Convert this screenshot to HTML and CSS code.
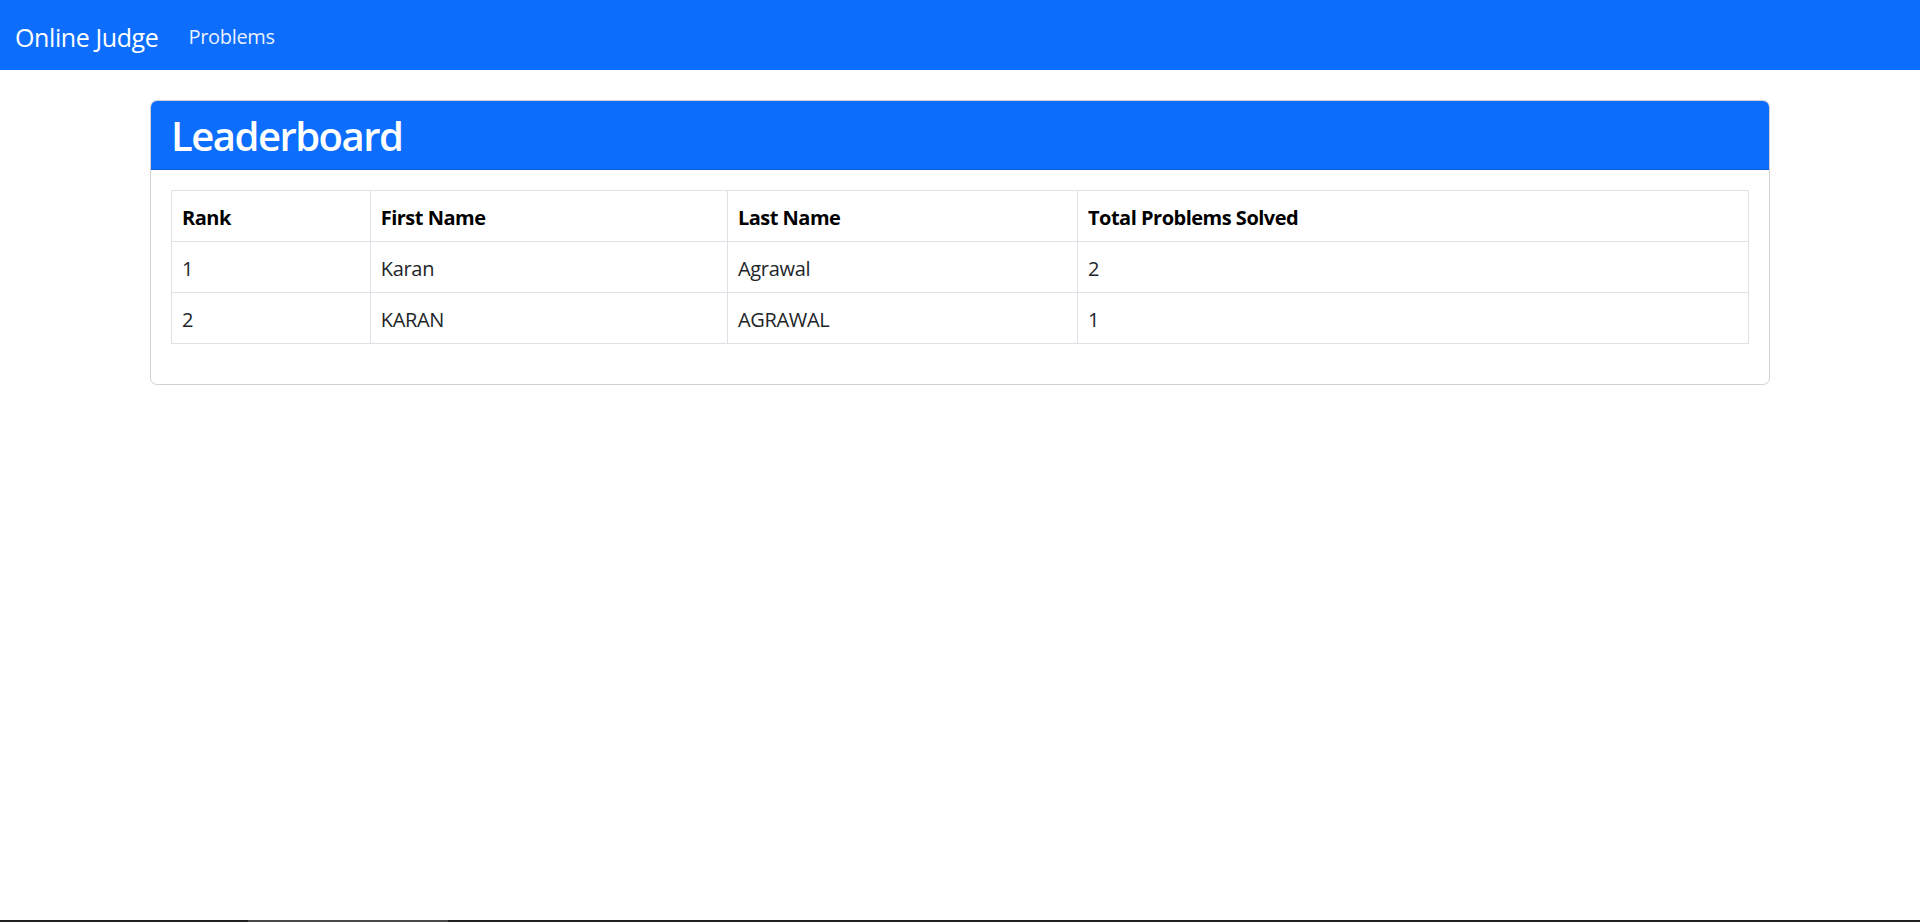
FILE: index.html
```html
<!DOCTYPE html>
<html lang="en">
<head>
<meta charset="utf-8">
<title>Leaderboard</title>
<link rel="stylesheet" href="styles.css">
</head>
<body>
<nav class="navbar">
  <a class="brand" href="#">Online Judge</a>
  <ul class="nav">
    <li><a class="nav-link" href="#">Problems</a></li>
  </ul>
</nav>
<main class="container">
  <section class="card">
    <header class="card-header">
      <h2 class="title">Leaderboard</h2>
    </header>
    <div class="card-body">
      <table class="table">
        <colgroup>
          <col class="c-rank">
          <col class="c-first">
          <col class="c-last">
          <col>
        </colgroup>
        <thead>
          <tr><th>Rank</th><th>First Name</th><th>Last Name</th><th>Total Problems Solved</th></tr>
        </thead>
        <tbody>
          <tr><td>1</td><td>Karan</td><td>Agrawal</td><td>2</td></tr>
          <tr><td>2</td><td>KARAN</td><td>AGRAWAL</td><td>1</td></tr>
        </tbody>
      </table>
    </div>
  </section>
</main>
<div class="taskbar"><span class="seg-a"></span><span class="seg-b"></span><span class="seg-c"></span></div>
</body>
</html>
```
FILE: styles.css
```css
* { box-sizing: border-box; }
html, body { margin: 0; padding: 0; }
body {
  font-family: "Open Sans", "Noto Sans", "Liberation Sans", sans-serif;
  font-size: 20px;
  line-height: 1.5;
  color: #212529;
  background: #fff;
  letter-spacing: -0.3px;
}
.navbar {
  background: #0d6efd;
  height: 70px;
  display: flex;
  align-items: center;
  padding: 10px 15px;
}
.brand {
  color: #fff;
  text-decoration: none;
  font-size: 25px;
  line-height: 37.5px;
  padding: 9px 0 3px;
  margin-right: 20px;
  letter-spacing: -0.4px;
}
.nav { list-style: none; margin: 0; padding: 0; display: flex; }
.nav-link {
  color: rgba(255,255,255,.92);
  text-decoration: none;
  padding: 12px 10px 8px;
  display: block;
  line-height: 30px;
}
.container {
  width: 1650px;
  margin: 0 auto;
  padding: 30px 15px 0;
}
.card {
  border: 1px solid rgba(0,0,0,.175);
  border-radius: 7px;
  overflow: hidden;
}
.card-header {
  background: #0d6efd;
  color: #fff;
  padding: 11px 20px 9px;
  border-bottom: 1px solid rgba(0,0,0,.175);
}
.title {
  margin: 0;
  font-size: 40px;
  line-height: 48px;
  font-weight: 600;
  letter-spacing: -1.5px;
}
.card-body { padding: 20px; }
.table {
  width: 100%;
  border-collapse: collapse;
  margin-bottom: 20px;
}
.c-rank { width: 12.6%; }
.c-first { width: 22.65%; }
.c-last { width: 22.2%; }
.table th, .table td {
  border: 1px solid #dee2e6;
  padding: 12px 10px 8px;
  text-align: left;
  line-height: 30px;
  vertical-align: top;
}
.table th { font-weight: 700; color: #000; letter-spacing: -0.5px; }
.taskbar {
  position: fixed;
  left: 0; right: 0; bottom: 0;
  height: 2px;
  display: flex;
}
.seg-a { width: 248px; background: #1f1f1f; }
.seg-b { width: 200px; background: #4a4a4a; }
.seg-c { flex: 1; background: #1f1f1f; }
```
